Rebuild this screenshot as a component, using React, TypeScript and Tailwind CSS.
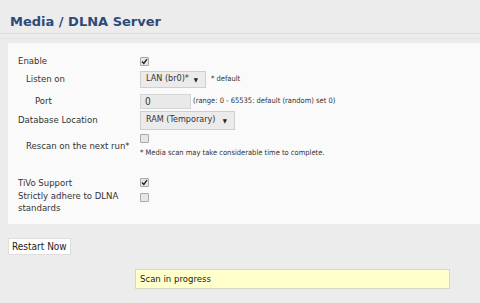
const font = { fontFamily: '"DejaVu Sans Condensed", "DejaVu Sans", Tahoma, sans-serif' }

function Check({ checked }: { checked?: boolean }) {
  return (
    <span className="inline-flex h-[9px] w-[9px] items-center justify-center rounded-[1px] border border-[#a9a9a9] bg-[#e6e6e6]">
      {checked && (
        <svg width="7" height="7" viewBox="0 0 7 7">
          <path d="M1 3.6 L2.8 5.4 L6 1.2" fill="none" stroke="#222" strokeWidth="1.4" />
        </svg>
      )}
    </span>
  )
}

function Select({ label, w }: { label: string; w: string }) {
  return (
    <span className={`inline-flex items-center justify-between whitespace-nowrap border border-[#cfcfcf] bg-[#ebebeb] pl-[5px] pr-[7px] text-[9px] text-[#333] ${w}`}>
      <span>{label}</span>
      <span className="text-[6px] text-[#222]">▼</span>
    </span>
  )
}

export default function App() {
  return (
    <div className="h-[303px] w-[480px] overflow-hidden bg-[#ececec] text-[#333]" style={font}>
      <div className="pl-[10px] pt-[14px]">
        <h1 className="text-[13px] font-bold leading-[16px] text-[#2e4a7a]" style={{ fontFamily: '"DejaVu Sans", Verdana, sans-serif' }}>
          Media / DLNA Server
        </h1>
      </div>
      <div className="mt-[3px] h-px bg-[#dcdcdc]" />
      <div className="h-[5px] border-b border-[#e3e3e3]" />

      <div className="ml-[8px] mt-[4px] h-[181px] bg-[#fafafa] pl-[10px] pt-[12px] text-[9.5px]">
        <div className="flex h-[13px] items-center">
          <span className="w-[122px]">Enable</span>
          <Check checked />
        </div>
        <div className="mt-[2px] flex h-[18px] items-center">
          <span className="w-[122px] pl-[8px]">Listen on</span>
          <Select label="LAN (br0)*" w="w-[66px] h-[17px]" />
          <span className="ml-[5px] text-[7.5px]">* default</span>
        </div>
        <div className="mt-[5px] flex h-[16px] items-center">
          <span className="w-[122px] pl-[17px]">Port</span>
          <span className="inline-flex h-[15px] w-[51px] items-center border border-[#d6d6d6] bg-[#e9e9e9] pl-[4px] text-[10px]">0</span>
          <span className="ml-[2px] text-[7.5px]">(range: 0 - 65535: default (random) set 0)</span>
        </div>
        <div className="mt-[1px] flex h-[20px] items-center">
          <span className="w-[122px]">Database Location</span>
          <Select label="RAM (Temporary)" w="w-[95px] h-[19px]" />
        </div>
        <div className="mt-[4px] flex items-center">
          <span className="w-[122px] pl-[8px]">Rescan on the next run*</span>
          <div className="flex flex-col">
            <Check />
            <span className="mt-[4px] text-[7.5px]">* Media scan may take considerable time to complete.</span>
          </div>
        </div>
        <div className="mt-[18px] flex h-[13px] items-center">
          <span className="w-[122px]">TiVo Support</span>
          <Check checked />
        </div>
        <div className="mt-[1px] flex items-start">
          <span className="w-[122px] leading-[12px]">Strictly adhere to DLNA<br />standards</span>
          <span className="mt-[3px] flex">
            <Check />
          </span>
        </div>
      </div>

      <div className="ml-[8px] mt-[14px] flex">
        <button className="h-[17px] border border-[#dedede] bg-white px-[3px] text-[10px] leading-[15px] text-[#222]">Restart Now</button>
      </div>

      <div className="ml-[135px] mt-[14px] flex h-[20px] w-[315px] items-center border border-[#d9d6c2] bg-[#ffffcc] pl-[4px] text-[9.5px] text-[#222]">
        Scan in progress
      </div>
    </div>
  )
}
